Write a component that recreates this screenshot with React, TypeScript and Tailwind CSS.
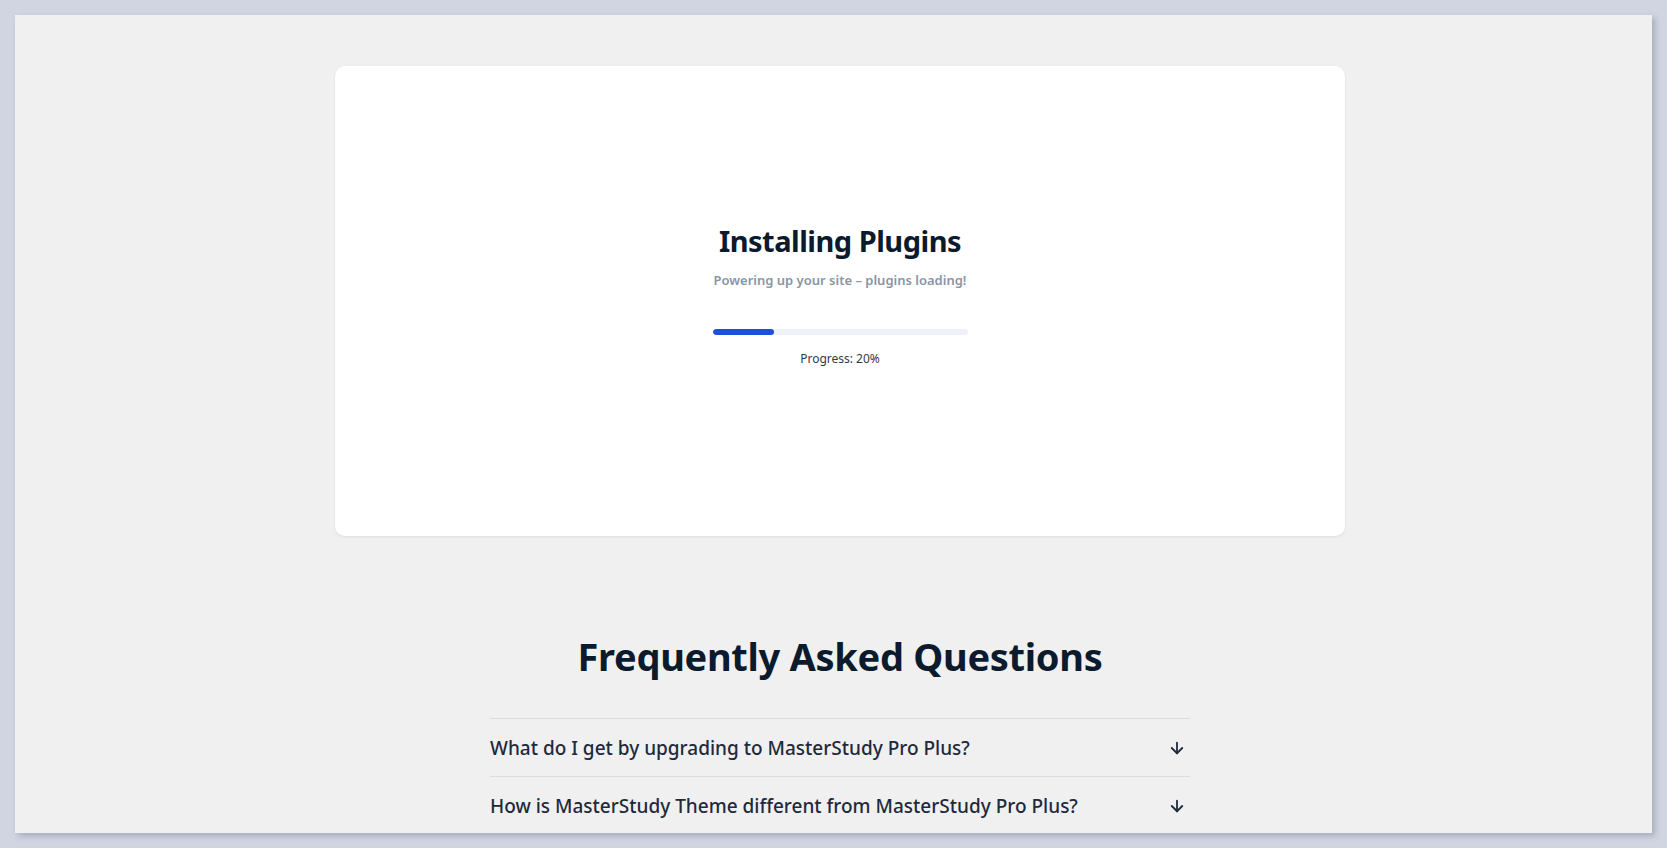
import React from 'react';
import { ArrowDown } from 'lucide-react';

const faqs = [
  'What do I get by upgrading to MasterStudy Pro Plus?',
  'How is MasterStudy Theme different from MasterStudy Pro Plus?',
];

const font = { fontFamily: '"Segoe UI", "Noto Sans", sans-serif' };

export default function App() {
  const progress = 20;

  return (
    <div className="h-screen w-full bg-[#d0d5e1] pt-[15px] pl-[15px] overflow-hidden" style={font}>
      <div className="w-[1637px] h-[818px] bg-[#f0f0f0] overflow-hidden shadow-[3px_3px_6px_rgba(40,50,80,0.25)]">
        <div className="pl-[13px] pt-[51px] flex flex-col items-center">
          {/* install card */}
          <div className="w-[1010px] h-[470px] bg-white rounded-[10px] shadow-[0_1px_3px_rgba(0,0,0,0.08)] flex flex-col items-center pt-[157px]">
            <h1 className="text-[29px] leading-[36px] font-bold text-[#0b1a2c] tracking-[-0.5px]">Installing Plugins</h1>
            <p className="mt-[11px] text-[13px] leading-[20px] font-semibold text-[#8a94a3]">
              Powering up your site – plugins loading!
            </p>
            <div className="mt-[39px] w-[255px] h-[6px] rounded-full bg-[#eef1f7] overflow-hidden">
              <div className="h-full rounded-full bg-[#1d4fd8]" style={{ width: '24%' }} />
            </div>
            <p className="mt-[15px] text-[12px] leading-[18px] text-[#333a44]">Progress: {progress}%</p>
          </div>

          {/* faq */}
          <section className="mt-[96px] w-[700px]">
            <h2 className="text-center text-[38px] leading-[48px] font-bold text-[#0b1a2c] tracking-[-0.3px]">
              Frequently Asked Questions
            </h2>
            <div className="mt-[38px]">
              {faqs.map((q) => (
                <div key={q} className="h-[58px] border-t border-[#dcdcdc] flex items-center justify-between">
                  <span className="text-[19px] leading-[28px] font-medium text-[#1e2a3b]">{q}</span>
                  <ArrowDown size={18} strokeWidth={2.4} className="text-[#1e2a3b] mr-[4px]" />
                </div>
              ))}
            </div>
          </section>
        </div>
      </div>
    </div>
  );
}
